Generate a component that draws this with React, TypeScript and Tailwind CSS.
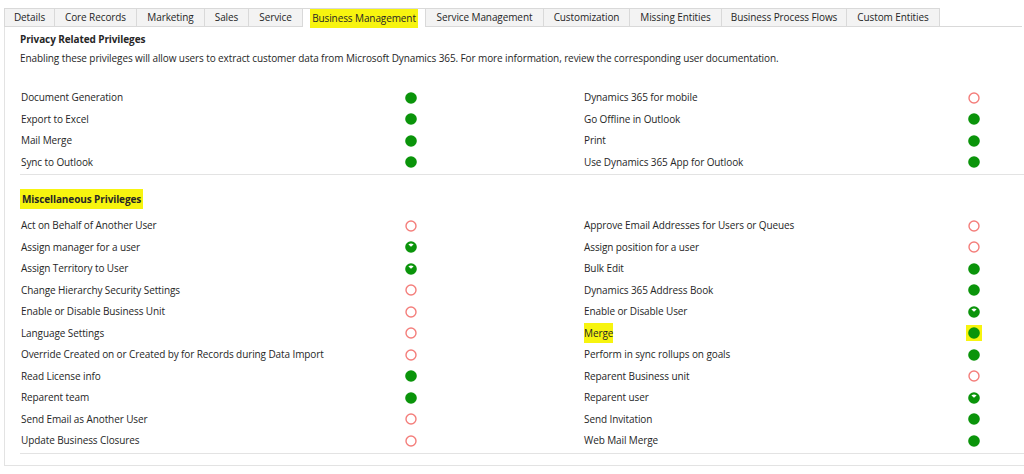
import React from 'react'

type Level = 'none' | 'partial' | 'full'

interface Priv {
  name: string
  level: Level
  highlight?: boolean
}

const tabs: { label: string; width: string }[] = [
  { label: 'Details', width: 'w-[51px]' },
  { label: 'Core Records', width: 'w-[82px]' },
  { label: 'Marketing', width: 'w-[68px]' },
  { label: 'Sales', width: 'w-[44px]' },
  { label: 'Service', width: 'w-[54px]' },
  { label: 'Business Management', width: 'w-[123px]' },
  { label: 'Service Management', width: 'w-[118px]' },
  { label: 'Customization', width: 'w-[86px]' },
  { label: 'Missing Entities', width: 'w-[92px]' },
  { label: 'Business Process Flows', width: 'w-[125px]' },
  { label: 'Custom Entities', width: 'w-[93px]' },
]

const privacyLeft: Priv[] = [
  { name: 'Document Generation', level: 'full' },
  { name: 'Export to Excel', level: 'full' },
  { name: 'Mail Merge', level: 'full' },
  { name: 'Sync to Outlook', level: 'full' },
]

const privacyRight: Priv[] = [
  { name: 'Dynamics 365 for mobile', level: 'none' },
  { name: 'Go Offline in Outlook', level: 'full' },
  { name: 'Print', level: 'full' },
  { name: 'Use Dynamics 365 App for Outlook', level: 'full' },
]

const miscLeft: Priv[] = [
  { name: 'Act on Behalf of Another User', level: 'none' },
  { name: 'Assign manager for a user', level: 'partial' },
  { name: 'Assign Territory to User', level: 'partial' },
  { name: 'Change Hierarchy Security Settings', level: 'none' },
  { name: 'Enable or Disable Business Unit', level: 'none' },
  { name: 'Language Settings', level: 'none' },
  { name: 'Override Created on or Created by for Records during Data Import', level: 'none' },
  { name: 'Read License info', level: 'full' },
  { name: 'Reparent team', level: 'full' },
  { name: 'Send Email as Another User', level: 'none' },
  { name: 'Update Business Closures', level: 'none' },
]

const miscRight: Priv[] = [
  { name: 'Approve Email Addresses for Users or Queues', level: 'none' },
  { name: 'Assign position for a user', level: 'none' },
  { name: 'Bulk Edit', level: 'full' },
  { name: 'Dynamics 365 Address Book', level: 'full' },
  { name: 'Enable or Disable User', level: 'partial' },
  { name: 'Merge', level: 'full', highlight: true },
  { name: 'Perform in sync rollups on goals', level: 'full' },
  { name: 'Reparent Business unit', level: 'none' },
  { name: 'Reparent user', level: 'partial' },
  { name: 'Send Invitation', level: 'full' },
  { name: 'Web Mail Merge', level: 'full' },
]

function LevelIcon({ level }: { level: Level }) {
  if (level === 'none') {
    return (
      <svg width="12" height="12" viewBox="0 0 12 12">
        <circle cx="6" cy="6" r="5" fill="white" stroke="#f47e7b" strokeWidth="1.4" />
      </svg>
    )
  }
  return (
    <svg width="12" height="12" viewBox="0 0 12 12">
      <circle cx="6" cy="6" r="5.8" fill="#0a940a" />
      {level === 'partial' && <path d="M3.4 3.4 Q6 1.6 8.6 3.4 L6 5.8 Z" fill="white" />}
    </svg>
  )
}

function Row({ p }: { p: Priv }) {
  return (
    <div className="flex h-[21.5px] items-center">
      <div className="w-[384px] shrink-0">
        <span className={p.highlight ? 'bg-[#f7f40f] py-[3px]' : ''}>{p.name}</span>
      </div>
      <div className={p.highlight ? 'flex h-[16px] w-[16px] -ml-[2px] items-center justify-center bg-[#f7f40f]' : 'flex'}>
        <LevelIcon level={p.level} />
      </div>
    </div>
  )
}

function Grid({ left, right }: { left: Priv[]; right: Priv[] }) {
  return (
    <div className="grid grid-cols-[563px_1fr]">
      <div>
        {left.map((p) => (
          <Row key={p.name} p={p} />
        ))}
      </div>
      <div>
        {right.map((p) => (
          <Row key={p.name} p={p} />
        ))}
      </div>
    </div>
  )
}

export default function App() {
  return (
    <div
      className="w-[1024px] h-[474px] overflow-hidden bg-white text-[10px] tracking-[-0.1px] text-[#262626]"
      style={{ fontFamily: '"Segoe UI", "Open Sans", "Noto Sans", sans-serif' }}
    >
      <div className="flex pl-[4px] pt-[8px] pr-[2px]">
        {tabs.map((t) => {
          const active = t.label === 'Business Management'
          return (
            <div
              key={t.label}
              className={
                (active
                  ? 'border-t border-r border-[#d9d9d9] bg-white'
                  : 'border-t border-r border-b border-[#d9d9d9] bg-[#f3f3f3] first:border-l') +
                ' flex h-[19px] shrink-0 items-center justify-center whitespace-nowrap ' +
                t.width
              }
            >
              <span className={active ? 'bg-[#f7f40f] px-[2px] py-[2px]' : ''}>{t.label}</span>
            </div>
          )
        })}
        <div className="flex-1 border-b border-[#d9d9d9]" />
      </div>

      <div className="ml-[4px] h-[439px] border-l border-b border-[#e3e3e3] pl-[15px]">
        <div className="pt-[3px] font-bold leading-[18px]">Privacy Related Privileges</div>
        <div className="leading-[20px]">
          Enabling these privileges will allow users to extract customer data from Microsoft Dynamics 365. For more
          information, review the corresponding user documentation.
        </div>
        <div className="mt-[19px] border-b border-[#e3e3e3] pb-[1px] pl-[1px]">
          <Grid left={privacyLeft} right={privacyRight} />
        </div>
        <div className="mt-[15px] font-bold leading-[18px]">
          <span className="bg-[#f7f40f] px-[2px] py-[3px]">Miscellaneous Privileges</span>
        </div>
        <div className="mt-[7px] border-b border-[#e3e3e3] pb-[1px] pl-[1px]">
          <Grid left={miscLeft} right={miscRight} />
        </div>
      </div>
    </div>
  )
}
